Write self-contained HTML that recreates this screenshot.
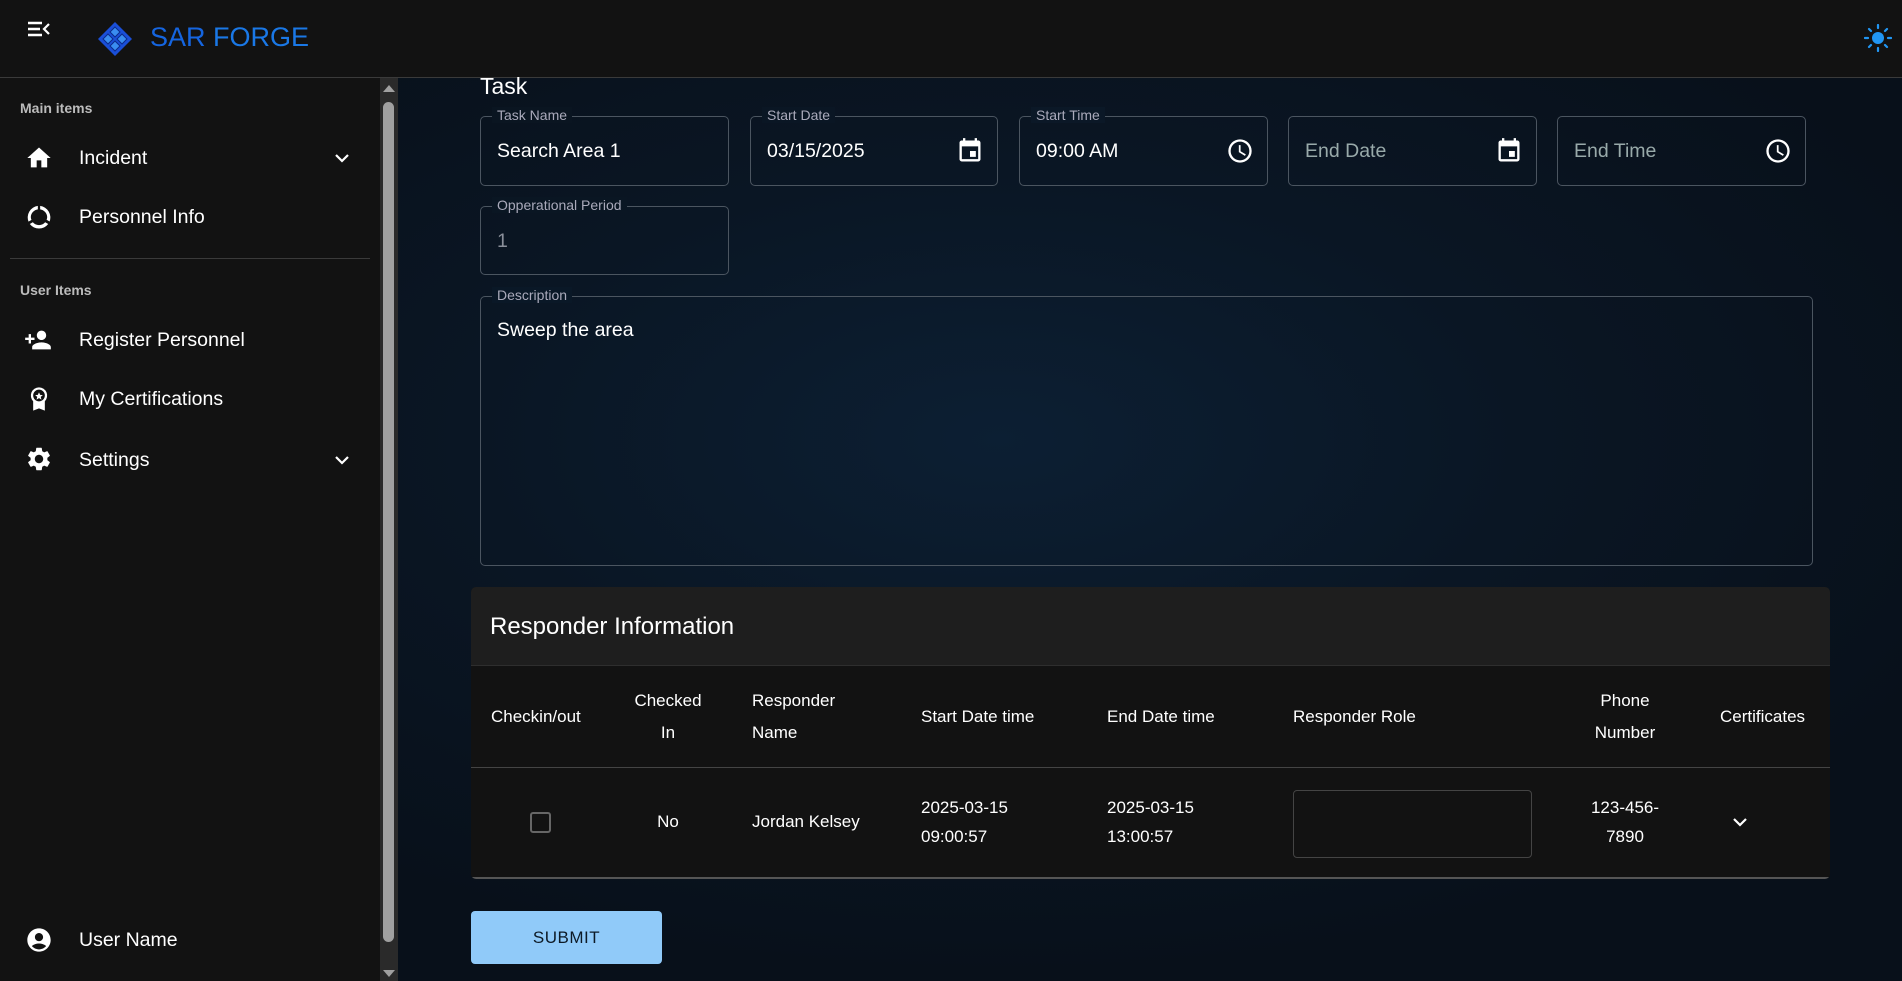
<!DOCTYPE html>
<html><head><meta charset="utf-8"><style>
*{box-sizing:border-box;margin:0;padding:0}
body{width:1902px;height:981px;overflow:hidden;background:#121212;font-family:"Liberation Sans",Arial,sans-serif;color:#fff;position:relative}
.a{position:absolute}
#hdr{left:0;top:0;width:1902px;height:78px;background:#121212;border-bottom:1px solid #3a3a3a}
#side{left:0;top:78px;width:380px;height:903px;background:#121212}
#main{left:398px;top:78px;width:1504px;height:903px;background:radial-gradient(ellipse 70% 60% at 40% 40%,#0c1f33 0%,#0a1624 50%,#08101a 100%)}
.sec{font-size:14px;font-weight:bold;color:#bbb}
.mi{font-size:19.5px;color:#fff}
.ic{width:28px;height:28px}
.fld{border:1px solid #4b5560;border-radius:5px}
.lbl{font-size:14px;color:#aab;background:transparent;padding:0 5px}
.val{font-size:19.5px;color:#fff}
.th{font-size:17px;color:#fff;line-height:1.9}
.td{font-size:17px;color:#fff;line-height:1.7}
</style></head><body>
<div id="hdr" class="a">
 <svg class="a" style="left:26px;top:20px" width="26" height="20" viewBox="0 0 26 20"><path d="M2 3h14M2 9h12M2 15h14" stroke="#fff" stroke-width="2.4"/><path d="M23 4l-5 5 5 5" stroke="#fff" stroke-width="2.2" fill="none"/></svg>
 <svg class="a" style="left:97px;top:21px" width="36" height="36" viewBox="0 0 36 36"><path d="M18 1L35 18 18 35 1 18z" fill="#1a4fd8"/><path d="M18 6l5 5-5 5-5-5zM25 13l5 5-5 5-5-5zM11 13l5 5-5 5-5-5zM18 20l5 5-5 5-5-5z" fill="#3a8df0" stroke="#0b2a8a" stroke-width="1"/></svg>
 <div class="a" style="left:150px;top:22px;font-size:27px;color:#1565e0">SAR <span style="color:#1a78e6">FORGE</span></div>
 <svg class="a" style="left:1864px;top:24px" width="28" height="28" viewBox="0 0 28 28"><circle cx="14" cy="14" r="6" fill="#2196f3"/><g stroke="#2196f3" stroke-width="2.2" stroke-linecap="round"><path d="M14 1v3M14 24v3M1 14h3M24 14h3M5 5l2 2M21 21l2 2M5 23l2-2M21 7l2-2"/></g></svg>
</div>
<div id="side" class="a">
 <div class="a sec" style="left:20px;top:22px">Main items</div>
 <svg class="a ic" style="left:25px;top:66px" viewBox="0 0 24 24"><path d="M10 20v-6h4v6h5v-8h3L12 3 2 12h3v8z" fill="#fff"/></svg>
 <div class="a mi" style="left:79px;top:69px">Incident</div>
 <svg class="a" style="left:333px;top:74px" width="18" height="12" viewBox="0 0 18 12"><path d="M3 3l6 6 6-6" stroke="#fff" stroke-width="2.2" fill="none"/></svg>
 <svg class="a ic" style="left:25px;top:125px" viewBox="0 0 24 24"><path d="M13 2.5v3c3.4.5 6 3.4 6 6.5 0 .9-.2 1.6-.5 2.4l2.6 1.5A10 10 0 0 0 13 2.5zM11 2.5A10 10 0 0 0 3 16l2.6-1.5C5.2 13.7 5 12.9 5 12c0-3.1 2.6-6 6-6.5zM6.7 16.5l-2.6 1.5A10 10 0 0 0 19.9 18l-2.6-1.5a7 7 0 0 1-10.6 0z" fill="#fff"/></svg>
 <div class="a mi" style="left:79px;top:128px">Personnel Info</div>
 <div class="a" style="left:10px;top:180px;width:360px;height:1px;background:#3a3a3a"></div>
 <div class="a sec" style="left:20px;top:204px">User Items</div>
 <svg class="a ic" style="left:24px;top:248px" viewBox="0 0 24 24"><path d="M15 12c2.21 0 4-1.79 4-4s-1.79-4-4-4-4 1.79-4 4 1.79 4 4 4zm-9-2V7H4v3H1v2h3v3h2v-3h3v-2H6zm9 4c-2.67 0-8 1.34-8 4v2h16v-2c0-2.66-5.33-4-8-4z" fill="#fff"/></svg>
 <div class="a mi" style="left:79px;top:251px">Register Personnel</div>
 <svg class="a ic" style="left:25px;top:307px" viewBox="0 0 24 24"><path d="M12 2a7 7 0 0 0-5 11.9V22l5-2 5 2v-8.1A7 7 0 0 0 12 2zm0 12a5 5 0 1 1 0-10 5 5 0 0 1 0 10z" fill="#fff"/><path d="M12 6.3l1 2.2 2.3.2-1.8 1.5.6 2.3-2.1-1.3-2.1 1.3.6-2.3-1.8-1.5 2.3-.2z" fill="#fff"/></svg>
 <div class="a mi" style="left:79px;top:310px">My Certifications</div>
 <svg class="a ic" style="left:25px;top:367px" viewBox="0 0 24 24"><path d="M19.14 12.94c.04-.3.06-.61.06-.94 0-.32-.02-.64-.07-.94l2.03-1.58a.49.49 0 0 0 .12-.61l-1.92-3.32a.488.488 0 0 0-.59-.22l-2.39.96c-.5-.38-1.03-.7-1.620-.94l-.36-2.54a.484.484 0 0 0-.48-.41h-3.84c-.24 0-.43.17-.47.41l-.36 2.54c-.59.24-1.13.57-1.62.94l-2.39-.96c-.22-.08-.47 0-.59.22L2.74 8.87c-.12.21-.08.47.12.61l2.03 1.58c-.05.3-.09.63-.09.94s.02.64.07.94l-2.03 1.58a.49.49 0 0 0-.12.61l1.92 3.32c.12.22.37.29.59.22l2.39-.96c.5.38 1.03.7 1.62.94l.36 2.54c.05.24.24.41.48.41h3.84c.24 0 .44-.17.47-.41l.36-2.54c.59-.24 1.13-.56 1.62-.94l2.39.96c.22.08.47 0 .59-.22l1.92-3.32c.12-.22.07-.47-.12-.61l-2.01-1.58zM12 15.6c-1.98 0-3.6-1.62-3.6-3.6s1.62-3.6 3.6-3.6 3.6 1.620 3.6 3.6-1.62 3.6-3.6 3.6z" fill="#fff"/></svg>
 <div class="a mi" style="left:79px;top:371px">Settings</div>
 <svg class="a" style="left:333px;top:376px" width="18" height="12" viewBox="0 0 18 12"><path d="M3 3l6 6 6-6" stroke="#fff" stroke-width="2.2" fill="none"/></svg>
 <svg class="a ic" style="left:25px;top:848px" viewBox="0 0 24 24"><path d="M12 2C6.48 2 2 6.48 2 12s4.48 10 10 10 10-4.48 10-10S17.52 2 12 2zm0 4c1.93 0 3.5 1.57 3.5 3.5S13.930 13 12 13s-3.5-1.57-3.5-3.5S10.07 6 12 6zm0 14c-2.03 0-4.43-.82-6.14-2.88a9.95 9.95 0 0 1 12.28 0C16.43 19.18 14.03 20 12 20z" fill="#fff"/></svg>
 <div class="a mi" style="left:79px;top:851px">User Name</div>
</div>
<div class="a" style="left:380px;top:78px;width:18px;height:903px;background:#2a2a2a"></div>
<div class="a" style="left:383px;top:102px;width:11px;height:840px;border-radius:6px;background:#a0a0a0"></div>
<svg class="a" style="left:381px;top:83px" width="16" height="10"><path d="M2 9l6-7 6 7z" fill="#a0a0a0"/></svg>
<svg class="a" style="left:381px;top:969px" width="16" height="10"><path d="M2 1l6 7 6-7z" fill="#a0a0a0"/></svg>
<div id="main" class="a"></div>
<div class="a" style="left:480px;top:73px;font-size:23px">Task</div>

<div class="a fld" style="left:480px;top:116px;width:249px;height:70px"></div>
<div class="a lbl" style="left:492px;top:107px;background:#0a1521">Task Name</div>
<div class="a val" style="left:497px;top:140px">Search Area 1</div>

<div class="a fld" style="left:750px;top:116px;width:248px;height:70px"></div>
<div class="a lbl" style="left:762px;top:107px;background:#0a1624">Start Date</div>
<div class="a val" style="left:767px;top:140px">03/15/2025</div>
<svg class="a" style="left:956px;top:137px" width="28" height="28" viewBox="0 0 24 24"><path d="M17 12h-5v5h5v-5zM16 1v2H8V1H6v2H5c-1.11 0-2 .9-2 2v14c0 1.1.89 2 2 2h14c1.1 0 2-.9 2-2V5c0-1.1-.9-2-2-2h-1V1h-2zm3 18H5V8h14v11z" fill="#fff"/></svg>

<div class="a fld" style="left:1019px;top:116px;width:249px;height:70px"></div>
<div class="a lbl" style="left:1031px;top:107px;background:#0b1827">Start Time</div>
<div class="a val" style="left:1036px;top:140px">09:00 AM</div>
<svg class="a" style="left:1226px;top:137px" width="28" height="28" viewBox="0 0 24 24"><path d="M12 2a10 10 0 1 0 0 20 10 10 0 0 0 0-20zm0 18a8 8 0 1 1 0-16 8 8 0 0 1 0 16zm.5-13H11v6l5.2 3.2.8-1.3-4.5-2.7z" fill="#fff"/></svg>

<div class="a fld" style="left:1288px;top:116px;width:249px;height:70px"></div>
<div class="a val" style="left:1305px;top:140px;color:#9aa">End Date</div>
<svg class="a" style="left:1495px;top:137px" width="28" height="28" viewBox="0 0 24 24"><path d="M17 12h-5v5h5v-5zM16 1v2H8V1H6v2H5c-1.11 0-2 .9-2 2v14c0 1.1.89 2 2 2h14c1.1 0 2-.9 2-2V5c0-1.1-.9-2-2-2h-1V1h-2zm3 18H5V8h14v11z" fill="#fff"/></svg>

<div class="a fld" style="left:1557px;top:116px;width:249px;height:70px"></div>
<div class="a val" style="left:1574px;top:140px;color:#9aa">End Time</div>
<svg class="a" style="left:1764px;top:137px" width="28" height="28" viewBox="0 0 24 24"><path d="M12 2a10 10 0 1 0 0 20 10 10 0 0 0 0-20zm0 18a8 8 0 1 1 0-16 8 8 0 0 1 0 16zm.5-13H11v6l5.2 3.2.8-1.3-4.5-2.7z" fill="#fff"/></svg>

<div class="a fld" style="left:480px;top:206px;width:249px;height:69px"></div>
<div class="a lbl" style="left:492px;top:197px;background:#0a1623">Opperational Period</div>
<div class="a val" style="left:497px;top:230px;color:#8a8f9a">1</div>

<div class="a fld" style="left:480px;top:296px;width:1333px;height:270px"></div>
<div class="a lbl" style="left:492px;top:287px;background:#0a1827">Description</div>
<div class="a val" style="left:497px;top:319px">Sweep the area</div>

<div class="a" style="left:471px;top:587px;width:1359px;height:292px;background:#121212;border-radius:5px;overflow:hidden">
 <div class="a" style="left:0;top:0;width:1359px;height:79px;background:#1e1e1e;border-bottom:1px solid #2e2e2e"></div>
 <div class="a" style="left:19px;top:26px;font-size:24px">Responder Information</div>
 <div class="a" style="left:0;top:180px;width:1359px;height:1px;background:#444"></div>
 <div class="a" style="left:0;top:290px;width:1359px;height:2px;background:#555"></div>
</div>
<div class="a th" style="left:491px;top:701px">Checkin/out</div>
<div class="a th" style="left:628px;top:685px;width:80px;text-align:center">Checked<br>In</div>
<div class="a th" style="left:752px;top:685px">Responder<br>Name</div>
<div class="a th" style="left:921px;top:701px">Start Date time</div>
<div class="a th" style="left:1107px;top:701px">End Date time</div>
<div class="a th" style="left:1293px;top:701px">Responder Role</div>
<div class="a th" style="left:1580px;top:685px;width:90px;text-align:center">Phone<br>Number</div>
<div class="a th" style="left:1720px;top:701px">Certificates</div>
<div class="a" style="left:530px;top:812px;width:21px;height:21px;border:2px solid #666;border-radius:3px"></div>
<div class="a td" style="left:628px;top:808px;width:80px;text-align:center">No</div>
<div class="a td" style="left:752px;top:808px">Jordan Kelsey</div>
<div class="a td" style="left:921px;top:794px">2025-03-15<br>09:00:57</div>
<div class="a td" style="left:1107px;top:794px">2025-03-15<br>13:00:57</div>
<div class="a" style="left:1293px;top:790px;width:239px;height:68px;border:1px solid #444;border-radius:4px"></div>
<div class="a td" style="left:1580px;top:794px;width:90px;text-align:center">123-456-<br>7890</div>
<svg class="a" style="left:1731px;top:816px" width="18" height="12" viewBox="0 0 18 12"><path d="M3 3l6 6 6-6" stroke="#fff" stroke-width="2.2" fill="none"/></svg>

<div class="a" style="left:471px;top:911px;width:191px;height:53px;background:#90caf9;border-radius:4px;color:#0d1a26;font-size:17px;text-align:center;line-height:53px;letter-spacing:.5px">SUBMIT</div>
</body></html>
